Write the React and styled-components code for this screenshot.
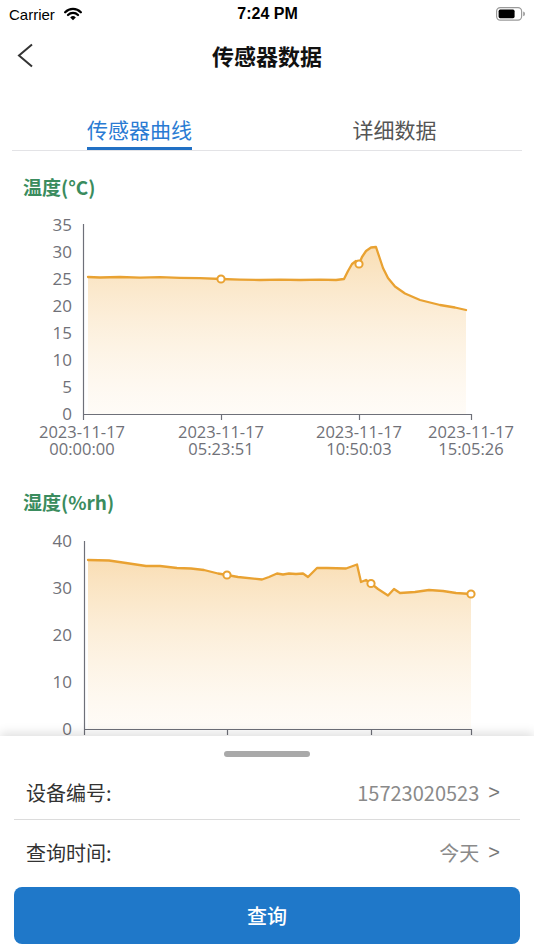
import React from "react";
import styled, { createGlobalStyle } from "styled-components";

const GlobalStyle = createGlobalStyle`
  html, body { margin: 0; padding: 0; background: #fff; }
  body { font-family: "Noto Sans CJK SC", "Noto Sans", sans-serif; }
`;

const Screen = styled.div`
  width: 534px;
  height: 950px;
  display: flex;
  flex-direction: column;
  overflow: hidden;
  background: #fff;
`;

const StatusBar = styled.div`
  height: 28px;
  flex-shrink: 0;
  display: grid;
  grid-template-columns: 1fr auto 1fr;
  align-items: center;
  padding: 0 8px 0 9px;
  font-family: "Liberation Sans", Arial, sans-serif;
  color: #000;
`;

const StatusLeft = styled.div`
  display: flex;
  align-items: center;
  gap: 9px;
  font-size: 15px;
`;

const StatusTime = styled.div`
  font-size: 16px;
  font-weight: 700;
`;

const StatusRight = styled.div`
  display: flex;
  justify-content: flex-end;
  align-items: center;
`;

const NavBar = styled.div`
  height: 54px;
  flex-shrink: 0;
  display: grid;
  grid-template-columns: 70px 1fr 70px;
  align-items: center;
`;

const BackButton = styled.div`
  padding-left: 17px;
  display: flex;
  align-items: center;
`;

const NavTitle = styled.div`
  text-align: center;
  font-size: 22px;
  font-weight: 600;
  color: #111;
`;

const TabBar = styled.div`
  margin: 23px 12px 0;
  display: grid;
  grid-template-columns: 1fr 1fr;
  border-bottom: 1px solid #e3e3e6;
  flex-shrink: 0;
`;

const Tab = styled.div`
  display: flex;
  justify-content: center;
`;

const TabLabel = styled.span`
  display: inline-block;
  padding: 9px 0 3px;
  line-height: 30px;
  font-size: 21px;
  color: ${(p) => (p.$active ? "#2a7bd3" : "#555")};
  border-bottom: 3px solid ${(p) => (p.$active ? "#2170c4" : "transparent")};
`;

const Content = styled.div`
  flex: 1;
  min-height: 0;
  overflow: hidden;
  display: flex;
  flex-direction: column;
`;

const SectionTitle = styled.div`
  margin: ${(p) => p.$mt}px 0 0 23px;
  line-height: 24px;
  font-size: 19px;
  font-weight: 700;
  color: #3a8c5e;
  flex-shrink: 0;
`;

const ChartSvg = styled.svg`
  display: block;
  flex-shrink: 0;
`;

const Sheet = styled.div`
  position: relative;
  z-index: 1;
  height: 214px;
  flex-shrink: 0;
  background: #fff;
  box-shadow: 0 -3px 10px rgba(0, 0, 0, 0.13);
  display: flex;
  flex-direction: column;
`;

const HandleWrap = styled.div`
  height: 29px;
  display: flex;
  justify-content: center;
  align-items: flex-start;
`;

const Handle = styled.div`
  margin-top: 15px;
  width: 86px;
  height: 6px;
  border-radius: 3px;
  background: #a9a9a9;
`;

const Row = styled.div`
  height: ${(p) => p.$h}px;
  margin: 0 14px;
  padding: 0 20px 0 12px;
  display: flex;
  align-items: center;
  justify-content: space-between;
  font-size: 20px;
  border-bottom: ${(p) => (p.$divider ? "1px solid #dcdcdc" : "none")};
`;

const RowLabel = styled.span`
  color: #333;
`;

const RowValue = styled.span`
  color: #8a8a8a;
  display: flex;
  align-items: center;
`;

const Chevron = styled.span`
  font-family: "Liberation Sans", Arial, sans-serif;
  font-size: 20px;
  margin-left: 9px;
  color: #777;
`;

const QueryButton = styled.button`
  margin: 3px 14px 0;
  height: 57px;
  border: none;
  border-radius: 8px;
  background: #1f78c9;
  color: #fff;
  font-family: "Noto Sans CJK SC", sans-serif;
  font-size: 20px;
  font-weight: 500;
`;

const WifiIcon = () => (
  <svg width="18" height="14" viewBox="0 0 18 14">
    <path d="M1.2 5.2 A11 11 0 0 1 16.8 5.2" fill="none" stroke="#000" strokeWidth="2.3" strokeLinecap="round" />
    <path d="M4 8 A7 7 0 0 1 14 8" fill="none" stroke="#000" strokeWidth="2.3" strokeLinecap="round" />
    <path d="M9 13.2 L6.2 10.4 A4 4 0 0 1 11.8 10.4 Z" fill="#000" />
  </svg>
);

const BatteryIcon = () => (
  <svg width="30" height="14" viewBox="0 0 30 14">
    <rect x="0.6" y="0.6" width="25" height="12.6" rx="3.6" fill="none" stroke="#9a9a9a" strokeWidth="1.2" />
    <rect x="2.6" y="2.6" width="16" height="8.6" rx="1.6" fill="#000" />
    <path d="M27.2 4.6 Q29 5 29 6.9 Q29 8.8 27.2 9.2 Z" fill="#9a9a9a" />
  </svg>
);

const BackIcon = () => (
  <svg width="17" height="25" viewBox="0 0 17 25">
    <polyline points="15,1.5 2,12.5 15,23.5" fill="none" stroke="#333" strokeWidth="2" />
  </svg>
);

const toPath = (pts) => pts.map((p, i) => `${i ? "L" : "M"}${p[0]},${p[1]}`).join(" ");

const LINE = "#e9a232";
const AXIS = "#6e7079";
const LABEL = "#707178";

function LineChart({ id, top, height, axisX, axisTop, baseY, rightX, yTicks, xTicks, dates, points, markers, gradTop }) {
  const line = toPath(points);
  const last = points[points.length - 1];
  const area = `${line} L${last[0]},${baseY} L${points[0][0]},${baseY} Z`;
  return (
    <ChartSvg width="534" height={height} viewBox={`0 ${top} 534 ${height}`}>
      <defs>
        <linearGradient id={id} x1="0" y1={gradTop} x2="0" y2={baseY} gradientUnits="userSpaceOnUse">
          <stop offset="0" stopColor="#f7d39c" stopOpacity="0.75" />
          <stop offset="1" stopColor="#fdf1df" stopOpacity="0.25" />
        </linearGradient>
      </defs>
      <path d={area} fill={`url(#${id})`} />
      <line x1={axisX} y1={axisTop} x2={axisX} y2={baseY} stroke={AXIS} strokeWidth="1.2" />
      <line x1={axisX} y1={baseY + 0.5} x2={rightX} y2={baseY + 0.5} stroke={AXIS} strokeWidth="1.2" />
      {xTicks.map((x) => (
        <line key={x} x1={x} y1={baseY} x2={x} y2={baseY + 6} stroke={AXIS} strokeWidth="1.2" />
      ))}
      {yTicks.map(([label, y]) => (
        <text key={label} x="72" y={y + 6} textAnchor="end" fontSize="17" fill={LABEL} fontFamily="'Open Sans', 'Noto Sans', sans-serif">
          {label}
        </text>
      ))}
      {dates &&
        dates.map(([x, d, t]) => (
          <text key={x} x={x} textAnchor="middle" fontSize="16.5" fill={LABEL} fontFamily="'Open Sans', 'Noto Sans', sans-serif">
            <tspan x={x} y={baseY + 24}>{d}</tspan>
            <tspan x={x} y={baseY + 41}>{t}</tspan>
          </text>
        ))}
      <path d={line} fill="none" stroke={LINE} strokeWidth="2.3" strokeLinejoin="round" strokeLinecap="round" />
      {markers.map(([x, y]) => (
        <circle key={x} cx={x} cy={y} r="3.6" fill="#fff" stroke={LINE} strokeWidth="2" />
      ))}
    </ChartSvg>
  );
}

const tempPoints = [
  [88, 277], [100, 277.5], [120, 277], [140, 277.6], [160, 277.2], [180, 277.8], [200, 278.2], [221, 279],
  [240, 279.6], [260, 280], [280, 279.6], [300, 280], [320, 279.6], [336, 280], [344, 279], [348, 271],
  [352, 264], [356, 261], [359, 264], [362, 257], [366, 251], [371, 247.5], [376, 247], [379, 256],
  [383, 268], [388, 278], [395, 286.5], [405, 293.5], [420, 300], [440, 305], [455, 307.5], [466, 310],
];

const humPoints = [
  [88, 560], [109, 560.5], [126, 563], [146, 566], [160, 566], [177, 568], [191, 568.5], [204, 570],
  [218, 573.5], [227, 575], [238, 577], [262, 579.5], [269, 577], [277, 573.5], [283, 574.5], [289, 573.5],
  [296, 574], [303, 573.5], [308, 577], [317, 568], [327, 568], [346, 568.5], [357, 564.5], [361, 582],
  [366, 580], [371, 583.5], [378, 589], [388, 595.5], [394, 589], [400, 593], [415, 592], [429, 590],
  [443, 591], [456, 593], [471, 594],
];

export default function App() {
  const tempTicks = [0, 5, 10, 15, 20, 25, 30, 35].map((v) => [String(v), 414 - v * 5.4]);
  const humTicks = [0, 10, 20, 30, 40].map((v) => [String(v), 729 - v * 4.7]);
  return (
    <>
      <GlobalStyle />
      <Screen>
        <StatusBar>
          <StatusLeft>
            <span>Carrier</span>
            <WifiIcon />
          </StatusLeft>
          <StatusTime>7:24 PM</StatusTime>
          <StatusRight>
            <BatteryIcon />
          </StatusRight>
        </StatusBar>
        <NavBar>
          <BackButton>
            <BackIcon />
          </BackButton>
          <NavTitle>传感器数据</NavTitle>
          <div />
        </NavBar>
        <TabBar>
          <Tab>
            <TabLabel $active>传感器曲线</TabLabel>
          </Tab>
          <Tab>
            <TabLabel>详细数据</TabLabel>
          </Tab>
        </TabBar>
        <Content>
          <SectionTitle $mt={24}>温度(°C)</SectionTitle>
          <LineChart
            id="gTemp"
            top={199}
            height={271}
            axisX={83.5}
            axisTop={224}
            baseY={414}
            rightX={471.5}
            yTicks={tempTicks}
            xTicks={[83.5, 221.5, 359.5, 471.5]}
            dates={[
              [82, "2023-11-17", "00:00:00"],
              [221, "2023-11-17", "05:23:51"],
              [359, "2023-11-17", "10:50:03"],
              [471, "2023-11-17", "15:05:26"],
            ]}
            points={tempPoints}
            markers={[[221, 279], [359, 264]]}
            gradTop={247}
          />
          <SectionTitle $mt={20}>湿度(%rh)</SectionTitle>
          <LineChart
            id="gHum"
            top={514}
            height={230}
            axisX={84.5}
            axisTop={541}
            baseY={729}
            rightX={471.5}
            yTicks={humTicks}
            xTicks={[84.5, 227.5, 371.5, 471.5]}
            points={humPoints}
            markers={[[227, 575], [371, 583.5], [471, 594]]}
            gradTop={560}
          />
        </Content>
        <Sheet>
          <HandleWrap>
            <Handle />
          </HandleWrap>
          <Row $h={54} $divider>
            <RowLabel>设备编号:</RowLabel>
            <RowValue>
              15723020523<Chevron>&gt;</Chevron>
            </RowValue>
          </Row>
          <Row $h={64}>
            <RowLabel>查询时间:</RowLabel>
            <RowValue>
              今天<Chevron>&gt;</Chevron>
            </RowValue>
          </Row>
          <QueryButton>查询</QueryButton>
        </Sheet>
      </Screen>
    </>
  );
}
